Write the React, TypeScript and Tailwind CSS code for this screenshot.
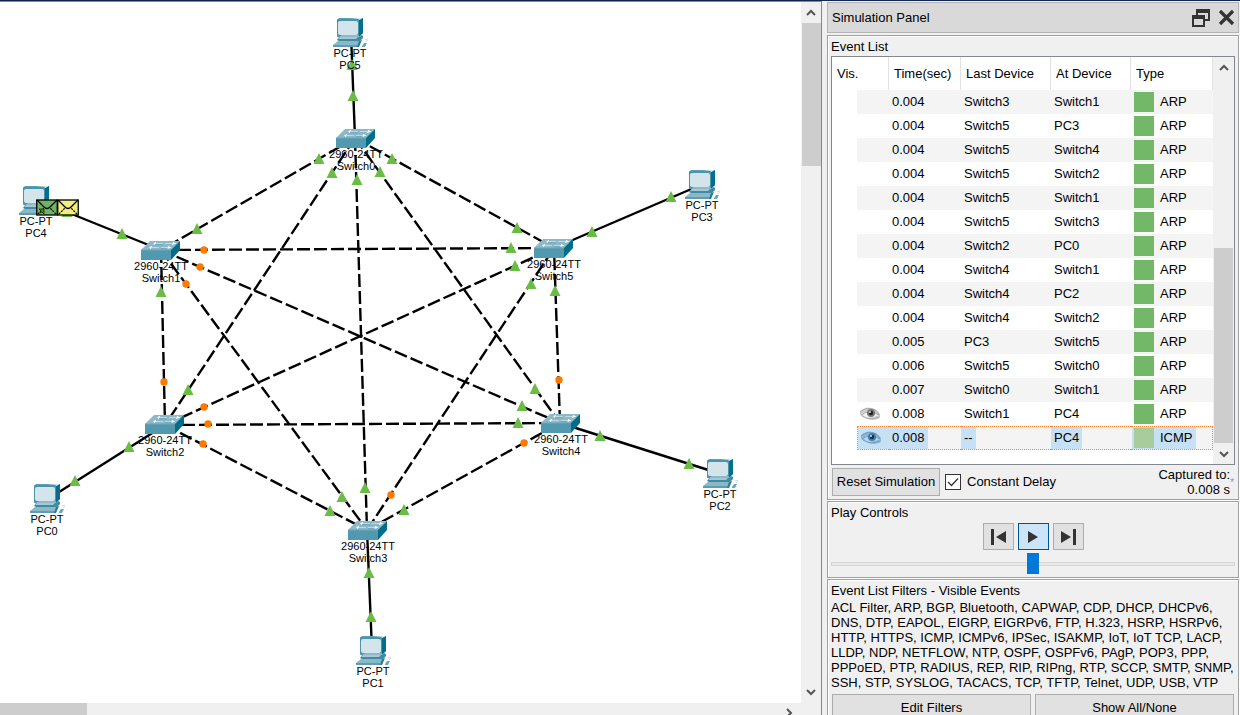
import { useState } from "react";
import type { ReactNode } from "react";

type Point = [number, number];
type Mark = { at: Point; up: boolean };
type NodeInfo = { kind: "pc" | "switch"; name: string; at: Point };

const nodes: NodeInfo[] = [
  { kind: "switch", name: "Switch0", at: [336, 127] },
  { kind: "switch", name: "Switch1", at: [141, 239] },
  { kind: "switch", name: "Switch2", at: [145, 413] },
  { kind: "switch", name: "Switch3", at: [348, 519] },
  { kind: "switch", name: "Switch4", at: [541, 412] },
  { kind: "switch", name: "Switch5", at: [534, 237] },
  { kind: "pc", name: "PC0", at: [30, 482] },
  { kind: "pc", name: "PC1", at: [356, 634] },
  { kind: "pc", name: "PC2", at: [703, 457] },
  { kind: "pc", name: "PC3", at: [685, 168] },
  { kind: "pc", name: "PC4", at: [19, 184] },
  { kind: "pc", name: "PC5", at: [333, 16] },
];

const switchHubs: Point[] = [
  [355, 136],
  [161, 248],
  [165, 423],
  [367, 528],
  [560, 421],
  [554, 246],
];

const pcLinks: [Point, Point][] = [
  [[48, 497], [165, 423]],
  [[372, 648], [367, 528]],
  [[721, 472], [560, 421]],
  [[703, 182], [554, 246]],
  [[37, 198], [161, 248]],
  [[351, 32], [355, 136]],
];

const trunks: [number, number][] = [
  [0, 1], [0, 2], [0, 3], [0, 4], [0, 5],
  [1, 2], [1, 3], [1, 4], [1, 5],
  [2, 3], [2, 4], [2, 5],
  [3, 4], [3, 5], [4, 5],
];

const up = (x: number, y: number): Mark => ({ at: [x, y], up: true });
const blocked = (x: number, y: number): Mark => ({ at: [x, y], up: false });

const marks: Mark[] = [
  up(319, 157), up(332, 171), up(357, 178), up(380, 170), up(392, 157),
  up(197, 227), up(122, 232), up(161, 290), up(67, 210),
  blocked(204, 248), blocked(200, 265), blocked(186, 282),
  up(517, 226), up(511, 246), up(515, 264), up(531, 282), up(555, 289), up(592, 230), up(671, 195),
  blocked(164, 380), up(188, 388), blocked(204, 405), blocked(208, 422), blocked(203, 442), up(129, 445), up(75, 479),
  blocked(559, 378), up(535, 387), up(522, 404), up(518, 421), blocked(524, 441), up(600, 434), up(689, 462),
  up(330, 509), up(342, 495), up(365, 486), blocked(391, 493), up(404, 508), up(369, 571), up(371, 615),
  up(353, 94), up(352, 63),
];

function PcIcon() {
  return (
    <svg width="36" height="29" viewBox="0 0 36 29" className="block" aria-hidden="true">
      <path d="M4 2 6 0H30L27 3V17L30 15V0" fill="#5c9fb3" />
      <path d="M26 2 30 0V15L26 19Z" fill="#00708c" />
      <rect x="4" y="1" width="22" height="18" rx="1" fill="#4c94ab" />
      <rect x="5" y="3" width="20" height="14" rx="2" fill="#d3e4eb" />
      <path d="M9 17H25L27 19H6Z" fill="#8db9c9" />
      <path d="M6 19H26L28 17 30 18V20L27 23H6L4 22Z" fill="#3f8ba4" />
      <path d="M7 19H25L23 21H5Z" fill="#a4c9d5" />
      <path d="M5 23H28L26 28H0V27Z" fill="#8bb7c7" />
      <path d="M0 27H26V29H0Z" fill="#5e9db1" />
      <path d="M26 23 29 22 26 29H24Z" fill="#237d98" />
      <path d="M29 28 31 25H34L32 29H29Z" fill="#6ba6b9" />
      <path d="M32 22 35 21M33 24 35 22" stroke="#bcd7df" strokeWidth=".8" />
    </svg>
  );
}

function SwitchIcon() {
  return (
    <svg width="39" height="19" viewBox="0 0 39 19" className="block" aria-hidden="true">
      <path d="M0 9 9 0H39L30 10H0Z" fill="#8db8c8" />
      <path d="M0 9H30V19H0Z" fill="#5299b0" />
      <path d="M30 9 39 0V9L30 19Z" fill="#006e8a" />
      <path d="M0 9H30" stroke="#6da8bb" strokeWidth="1" />
      <path d="M13 2.5H22M9 6.5H18M24 2.5H33M20 6.5H28" stroke="#c5dde6" strokeWidth=".9" />
      <path d="M15 1.5 13 2.5 14 3.5M11 5.5 9 6.5 10 7.5M32 1.5 34 2.5 31 3.5M27 5.5 29 6.5 26 7.5" fill="none" stroke="#ffffff" strokeWidth="1.1" />
      <path d="M14 3.8H22M20 7.8H27" stroke="#5b9ab0" strokeWidth=".7" />
    </svg>
  );
}

function Envelope({ fill, marked }: { fill: string; marked?: boolean }) {
  return (
    <svg width="22" height="17" viewBox="0 0 22 17" className="block" aria-hidden="true">
      <rect x=".75" y="1" width="20.5" height="15" fill={fill} stroke="#000" strokeWidth="1.3" />
      <path d="M1 1 8 8Q11 11 14 8L21 1" fill="none" stroke="#000" strokeWidth="1.3" />
      <path d="M2 15 8 9M20 15 14 9" stroke="#000" strokeWidth="1.2" strokeDasharray="2 1" />
      {marked && <path d="M3 10H8V15L6 13 4 14 5 12Z" fill="#4c8422" stroke="#172b08" strokeWidth=".8" />}
    </svg>
  );
}

function EyeIcon({ selected }: { selected?: boolean }) {
  const lid = selected ? "#6f9fc0" : "#a8a8a8";
  return (
    <svg width="22" height="16" viewBox="0 0 22 16" className="block" aria-hidden="true">
      <path d="M1 5Q8-1 16 3L21 8V12Q13 16 7 12L1 9Z" fill={selected ? "#8db7d6" : "#cfcfcf"} />
      <path d="M3 8Q9 3 20 9Q12 13 6 11Z" fill={selected ? "#b5d8f0" : "#f4f4f4"} />
      <path d="M1 6Q8 0 16 4 19 5 20 9M2 9Q10 3 20 9M3 10Q11 15 20 11" fill="none" stroke={lid} strokeWidth="1" />
      <circle cx="12" cy="7" r="4" fill={selected ? "#477ca2" : "#777777"} />
      <circle cx="12" cy="7" r="2.2" fill={selected ? "#123653" : "#222222"} />
      <circle cx="11" cy="6" r=".9" fill="#eef6fb" />
    </svg>
  );
}

function Chevron({ turn }: { turn: "up" | "down" | "right" }) {
  const d = { up: "M2 8 6 4 10 8", down: "M2 4 6 8 10 4", right: "M4 2 8 6 4 10" }[turn];
  return (
    <svg width="12" height="12" viewBox="0 0 12 12" className="block" aria-hidden="true">
      <path d={d} fill="none" stroke="#555555" strokeWidth="2" />
    </svg>
  );
}

function Topology() {
  return (
    <div className="relative min-w-0 flex-1 overflow-hidden bg-white">
      <svg width="801" height="701" className="absolute top-0 left-0" aria-hidden="true">
        <g stroke="#000" strokeWidth="2.4">
          {pcLinks.map(([a, b], i) => (
            <line key={i} x1={a[0]} y1={a[1]} x2={b[0]} y2={b[1]} />
          ))}
          {trunks.map(([a, b]) => (
            <line
              key={`${a}-${b}`}
              x1={switchHubs[a][0]}
              y1={switchHubs[a][1]}
              x2={switchHubs[b][0]}
              y2={switchHubs[b][1]}
              strokeDasharray="13 4"
            />
          ))}
        </g>
        {marks.map((m, i) =>
          m.up ? (
            <path key={i} d={`M${m.at[0]} ${m.at[1] - 6}l5.5 11h-11z`} fill="#69bd45" />
          ) : (
            <circle key={i} cx={m.at[0]} cy={m.at[1]} r="3.7" fill="#ff7800" />
          ),
        )}
      </svg>
      {nodes.map((n) => (
        <div
          key={n.name}
          className="absolute flex flex-col items-center text-[11px] leading-3 whitespace-nowrap"
          style={{ left: n.at[0] - 20, top: n.at[1] }}
        >
          <div className={n.kind === "pc" ? "flex w-[74px] pl-5" : "flex w-[80px] pl-5"}>
            {n.kind === "pc" ? <PcIcon /> : <SwitchIcon />}
          </div>
          <span>{n.kind === "pc" ? "PC-PT" : "2960-24TT"}</span>
          <span>{n.name}</span>
        </div>
      ))}
      <div className="absolute top-[197px] left-[36px] flex">
        <Envelope fill="#6fb463" marked />
        <div className="-ml-px">
          <Envelope fill="#f1ee82" />
        </div>
      </div>
    </div>
  );
}

const events: [string, string, string, string][] = [
  ["0.004", "Switch3", "Switch1", "ARP"],
  ["0.004", "Switch5", "PC3", "ARP"],
  ["0.004", "Switch5", "Switch4", "ARP"],
  ["0.004", "Switch5", "Switch2", "ARP"],
  ["0.004", "Switch5", "Switch1", "ARP"],
  ["0.004", "Switch5", "Switch3", "ARP"],
  ["0.004", "Switch2", "PC0", "ARP"],
  ["0.004", "Switch4", "Switch1", "ARP"],
  ["0.004", "Switch4", "PC2", "ARP"],
  ["0.004", "Switch4", "Switch2", "ARP"],
  ["0.005", "PC3", "Switch5", "ARP"],
  ["0.006", "Switch5", "Switch0", "ARP"],
  ["0.007", "Switch0", "Switch1", "ARP"],
  ["0.008", "Switch1", "PC4", "ARP"],
  ["0.008", "--", "PC4", "ICMP"],
];

const filterLines = [
  "ACL Filter, ARP, BGP, Bluetooth, CAPWAP, CDP, DHCP, DHCPv6,",
  "DNS, DTP, EAPOL, EIGRP, EIGRPv6, FTP, H.323, HSRP, HSRPv6,",
  "HTTP, HTTPS, ICMP, ICMPv6, IPSec, ISAKMP, IoT, IoT TCP, LACP,",
  "LLDP, NDP, NETFLOW, NTP, OSPF, OSPFv6, PAgP, POP3, PPP,",
  "PPPoED, PTP, RADIUS, REP, RIP, RIPng, RTP, SCCP, SMTP, SNMP,",
  "SSH, STP, SYSLOG, TACACS, TCP, TFTP, Telnet, UDP, USB, VTP",
];

function Group({ title, children }: { title: string; children: ReactNode }) {
  return (
    <section className="border border-[#a0a0a0] px-[3px] pt-[3px] shadow-[inset_1px_1px_0_#fff,1px_1px_0_#fff]">
      <h2 className="leading-4">{title}</h2>
      {children}
    </section>
  );
}

function EventTable() {
  return (
    <div className="mt-px flex h-[409px] border border-[#828790] bg-white">
      <div className="min-w-0 flex-1">
        <table className="w-full table-fixed border-separate border-spacing-0 text-left">
          <colgroup>
            <col className="w-[25px]" />
            <col className="w-[32px]" />
            <col className="w-[72px]" />
            <col className="w-[90px]" />
            <col className="w-[80px]" />
            <col />
          </colgroup>
          <thead>
            <tr className="h-[33px] [&>th]:border-r [&>th]:border-[#e2e2e2] [&>th]:p-0 [&>th]:pl-[5px] [&>th]:font-normal [&>th]:whitespace-nowrap">
              <th colSpan={2}>Vis.</th>
              <th>Time(sec)</th>
              <th>Last Device</th>
              <th>At Device</th>
              <th>Type</th>
            </tr>
          </thead>
          <tbody>
            {events.map(([time, last, at, type], i) => {
              const selected = i === events.length - 1;
              const tint = selected ? "bg-[#c6e0f6]" : "";
              const shade = i % 2 === 0 ? "bg-[#f4f4f4]" : "";
              const edge = selected ? " border-y border-dotted border-[#ff8326]" : "";
              const text = "inline-block h-[22px] px-[3px] align-top leading-[22px] " + tint;
              return (
                <tr key={i} className="h-6 [&>td]:p-0">
                  <td />
                  <td className={shade + edge + (selected ? " border-l" : "")}>
                    <div className={"flex h-[22px] items-center pl-[2px] " + tint}>
                      {i >= 13 && <EyeIcon selected={selected} />}
                    </div>
                  </td>
                  <td className={shade + edge}>
                    <div className={text}>{time}</div>
                  </td>
                  <td className={shade + edge}>
                    <div className={text}>{last}</div>
                  </td>
                  <td className={shade + edge}>
                    <div className={text}>{at}</div>
                  </td>
                  <td className={shade + edge + (selected ? " border-r" : "")}>
                    <div className={"ml-px inline-flex h-[22px] items-center gap-[6px] pr-[3px] pl-[2px] align-top " + tint}>
                      <span className={"h-5 w-5 " + (selected ? "bg-[#a8cc9c]" : "bg-[#73b868]")} />
                      <span>{type}</span>
                    </div>
                  </td>
                </tr>
              );
            })}
          </tbody>
        </table>
      </div>
      <div className="flex w-[21px] flex-col items-center bg-[#f0f0f0]">
        <div className="flex h-[22px] items-center">
          <Chevron turn="up" />
        </div>
        <div className="mt-auto h-[195px] w-[19px] bg-[#cdcdcd]" />
        <div className="flex h-[21px] items-center">
          <Chevron turn="down" />
        </div>
      </div>
    </div>
  );
}

const plainButton = "border border-[#adadad] bg-[#e1e1e1] text-center";

function SimulationPanel() {
  const [delay, setDelay] = useState(true);
  const [speed, setSpeed] = useState(50);
  return (
    <aside className="flex w-[413px] shrink-0 flex-col pt-px pr-px">
      <header className="flex h-[31px] shrink-0 items-center border border-[#b4b4b4] bg-[#d9d9d9] pr-[3px] pl-1">
        <h1 className="flex-1">Simulation Panel</h1>
        <button aria-label="Undock panel" className="mr-[8px]">
          <svg width="18" height="18" viewBox="0 0 18 18" className="block">
            <path d="M5 6V1H17V11H12M5 3H17" fill="none" stroke="#333" strokeWidth="2" />
            <path d="M1 7H12V17H1ZM1 9H12" fill="none" stroke="#333" strokeWidth="2" />
          </svg>
        </button>
        <button aria-label="Close panel">
          <svg width="17" height="17" viewBox="0 0 17 17" className="block">
            <path d="M2 2 15 15M15 2 2 15" stroke="#333" strokeWidth="3.2" />
          </svg>
        </button>
      </header>
      <div className="mt-[2px] flex flex-col gap-px">
        <Group title="Event List">
          <EventTable />
          <div className="flex h-[34px] items-center">
            <button className={plainButton + " ml-px h-7 w-[108px] whitespace-nowrap"}>Reset Simulation</button>
            <label className="ml-[5px] flex items-center gap-[6px]">
              <span className="relative flex">
                <input
                  type="checkbox"
                  checked={delay}
                  onChange={(e) => setDelay(e.target.checked)}
                  className="h-4 w-4 appearance-none border border-[#333] bg-white"
                />
                {delay && (
                  <svg viewBox="0 0 16 16" className="pointer-events-none absolute inset-0 h-4 w-4">
                    <path d="M3 8 6.5 11.5 13 4.5" fill="none" stroke="#333" strokeWidth="1.3" />
                  </svg>
                )}
              </span>
              Constant Delay
            </label>
            <div className="ml-auto text-right leading-[15px]">
              <div>Captured to:</div>
              <div>0.008 s</div>
            </div>
            <span className="w-[5px] text-[11px] text-[#8f9db0]">*</span>
          </div>
        </Group>
        <Group title="Play Controls">
          <div className="flex h-[56px] flex-col">
            <div className="mt-[2px] flex justify-center gap-1">
              <button aria-label="Step back" className={plainButton + " flex h-[27px] w-[31px] items-center justify-center"}>
                <svg width="15" height="18" viewBox="0 0 15 18">
                  <path d="M0 1H3V17H0ZM15 3V15L5 9Z" fill="#333" />
                </svg>
              </button>
              <button
                aria-label="Play"
                className="flex h-[27px] w-[31px] items-center justify-center border border-[#005499] bg-[#cce4f7]"
              >
                <svg width="11" height="14" viewBox="0 0 11 14">
                  <path d="M0 1V13L10 7Z" fill="#333" />
                </svg>
              </button>
              <button aria-label="Step forward" className={plainButton + " flex h-[27px] w-[31px] items-center justify-center"}>
                <svg width="15" height="18" viewBox="0 0 15 18">
                  <path d="M12 1H15V17H12ZM0 3V15L10 9Z" fill="#333" />
                </svg>
              </button>
            </div>
            <input
              type="range"
              aria-label="Play speed"
              min={0}
              max={100}
              value={speed}
              onChange={(e) => setSpeed(Number(e.target.value))}
              className="mt-[3px] h-[21px] w-full appearance-none bg-transparent [&::-webkit-slider-runnable-track]:h-1 [&::-webkit-slider-runnable-track]:border [&::-webkit-slider-runnable-track]:border-[#d6d6d6] [&::-webkit-slider-runnable-track]:bg-[#e7eaea] [&::-webkit-slider-thumb]:-mt-[10px] [&::-webkit-slider-thumb]:h-[21px] [&::-webkit-slider-thumb]:w-3 [&::-webkit-slider-thumb]:appearance-none [&::-webkit-slider-thumb]:bg-[#0078d7]"
            />
          </div>
        </Group>
        <Group title="Event List Filters - Visible Events">
          <div className="mt-px leading-[15px] whitespace-nowrap">
            {filterLines.map((line) => (
              <p key={line}>{line}</p>
            ))}
          </div>
          <div className="mt-1 flex gap-1 px-px pb-1">
            <button className={plainButton + " h-7 flex-1"}>Edit Filters</button>
            <button className={plainButton + " h-7 flex-1"}>Show All/None</button>
          </div>
        </Group>
      </div>
    </aside>
  );
}

export default function App() {
  return (
    <div className="flex h-screen flex-col overflow-hidden border-t border-[#102650] bg-[#f0f0f0] font-['Liberation_Sans',Arial,sans-serif] text-[13px] text-black">
      <div className="flex min-h-0 flex-1">
        <main className="mr-[5px] flex min-w-0 flex-1 flex-col border-t border-r border-[#828790]">
          <div className="flex min-h-0 flex-1">
            <Topology />
            <div className="flex w-5 flex-col items-center">
              <div className="flex h-[21px] items-center">
                <Chevron turn="up" />
              </div>
              <div className="h-[143px] w-[19px] bg-[#cdcdcd]" />
              <div className="mt-auto flex h-[23px] items-center">
                <Chevron turn="down" />
              </div>
            </div>
          </div>
          <div className="flex h-3 overflow-hidden">
            <div className="h-[19px] w-[87px] bg-[#cdcdcd]" />
            <div className="mr-[26px] ml-auto flex h-[19px] items-center">
              <Chevron turn="right" />
            </div>
          </div>
        </main>
        <SimulationPanel />
      </div>
    </div>
  );
}
